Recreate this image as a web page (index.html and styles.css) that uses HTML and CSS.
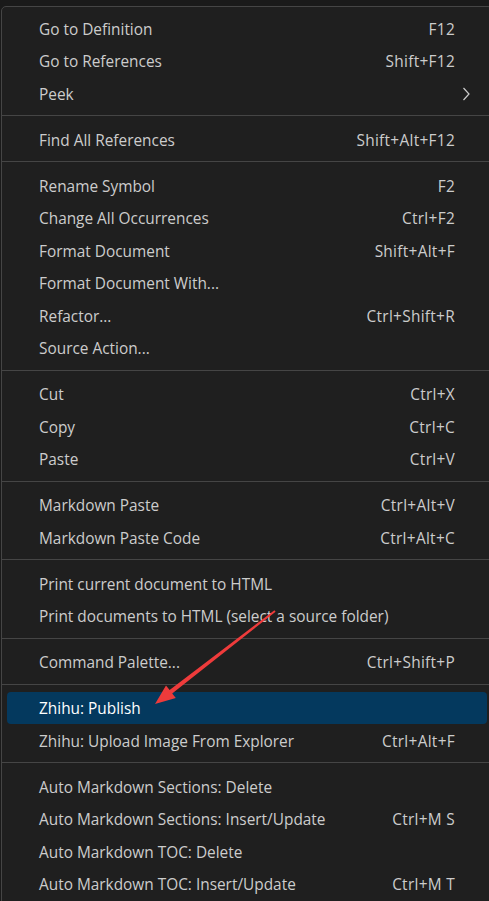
FILE: index.html
```html
<!DOCTYPE html>
<html>
<head>
<meta charset="utf-8">
<link rel="stylesheet" href="styles.css">
</head>
<body>
<div class="menu">
  <div class="item"><span class="label">Go to Definition</span><span class="key">F12</span></div>
  <div class="item"><span class="label">Go to References</span><span class="key">Shift+F12</span></div>
  <div class="item"><span class="label">Peek</span><svg class="chev" width="8" height="14" viewBox="0 0 8 14"><path d="M1.5 1 L7 7 L1.5 13" fill="none" stroke="#cccccc" stroke-width="1.2"/></svg></div>
  <div class="sep"></div>
  <div class="item"><span class="label">Find All References</span><span class="key">Shift+Alt+F12</span></div>
  <div class="sep"></div>
  <div class="item"><span class="label">Rename Symbol</span><span class="key">F2</span></div>
  <div class="item"><span class="label">Change All Occurrences</span><span class="key">Ctrl+F2</span></div>
  <div class="item"><span class="label">Format Document</span><span class="key">Shift+Alt+F</span></div>
  <div class="item"><span class="label">Format Document With...</span></div>
  <div class="item"><span class="label">Refactor...</span><span class="key">Ctrl+Shift+R</span></div>
  <div class="item"><span class="label">Source Action...</span></div>
  <div class="sep"></div>
  <div class="item"><span class="label">Cut</span><span class="key">Ctrl+X</span></div>
  <div class="item"><span class="label">Copy</span><span class="key">Ctrl+C</span></div>
  <div class="item"><span class="label">Paste</span><span class="key">Ctrl+V</span></div>
  <div class="sep"></div>
  <div class="item"><span class="label">Markdown Paste</span><span class="key">Ctrl+Alt+V</span></div>
  <div class="item"><span class="label">Markdown Paste Code</span><span class="key">Ctrl+Alt+C</span></div>
  <div class="sep"></div>
  <div class="item"><span class="label">Print current document to HTML</span></div>
  <div class="item"><span class="label">Print documents to HTML (select a source folder)</span></div>
  <div class="sep"></div>
  <div class="item"><span class="label">Command Palette...</span><span class="key">Ctrl+Shift+P</span></div>
  <div class="sep"></div>
  <div class="item active"><span class="label">Zhihu: Publish</span></div>
  <div class="item"><span class="label">Zhihu: Upload Image From Explorer</span><span class="key">Ctrl+Alt+F</span></div>
  <div class="sep"></div>
  <div class="item"><span class="label">Auto Markdown Sections: Delete</span></div>
  <div class="item"><span class="label">Auto Markdown Sections: Insert/Update</span><span class="key">Ctrl+M S</span></div>
  <div class="item"><span class="label">Auto Markdown TOC: Delete</span></div>
  <div class="item"><span class="label">Auto Markdown TOC: Insert/Update</span><span class="key">Ctrl+M T</span></div>
</div>
<svg class="arrow" width="489" height="901" viewBox="0 0 489 901">
  <polygon points="274.4,610.2 169.6,690.1 166.0,685.5 155,704 175.8,698.1 172.2,693.5 275.6,611.8" fill="#ee3b3b"/>
</svg>
</body>
</html>
```
FILE: styles.css
```css
html, body {
  margin: 0;
  padding: 0;
  background: #1a1a1a;
  overflow: hidden;
  height: 901px;
}
body {
  position: relative;
  font-family: "Open Sans", "Noto Sans", sans-serif;
  font-size: 15.4px;
  color: #cccccc;
}
.menu {
  margin: 6px 0 0 1px;
  width: 490px;
  background: #1f1f1f;
  border: 1px solid #454545;
  border-radius: 5px;
  padding: 5.75px 0 20px;
}
.item {
  display: flex;
  align-items: center;
  height: 32.5px;
  margin: 0 5px;
  padding: 0 32px;
  border-radius: 4px;
  white-space: nowrap;
}
.label {
  flex: 1 1 auto;
}
.key {
  flex: none;
  letter-spacing: 0.3px;
}
.chev {
  flex: none;
  margin-right: -15px;
}
.active {
  background: #04395e;
  color: #ffffff;
  height: 32px;
  margin-bottom: 0.5px;
}
.sep {
  height: 1px;
  background: #454545;
  margin: 5px 0 7.5px;
}
.arrow {
  position: absolute;
  left: 0;
  top: 0;
  pointer-events: none;
}
```
